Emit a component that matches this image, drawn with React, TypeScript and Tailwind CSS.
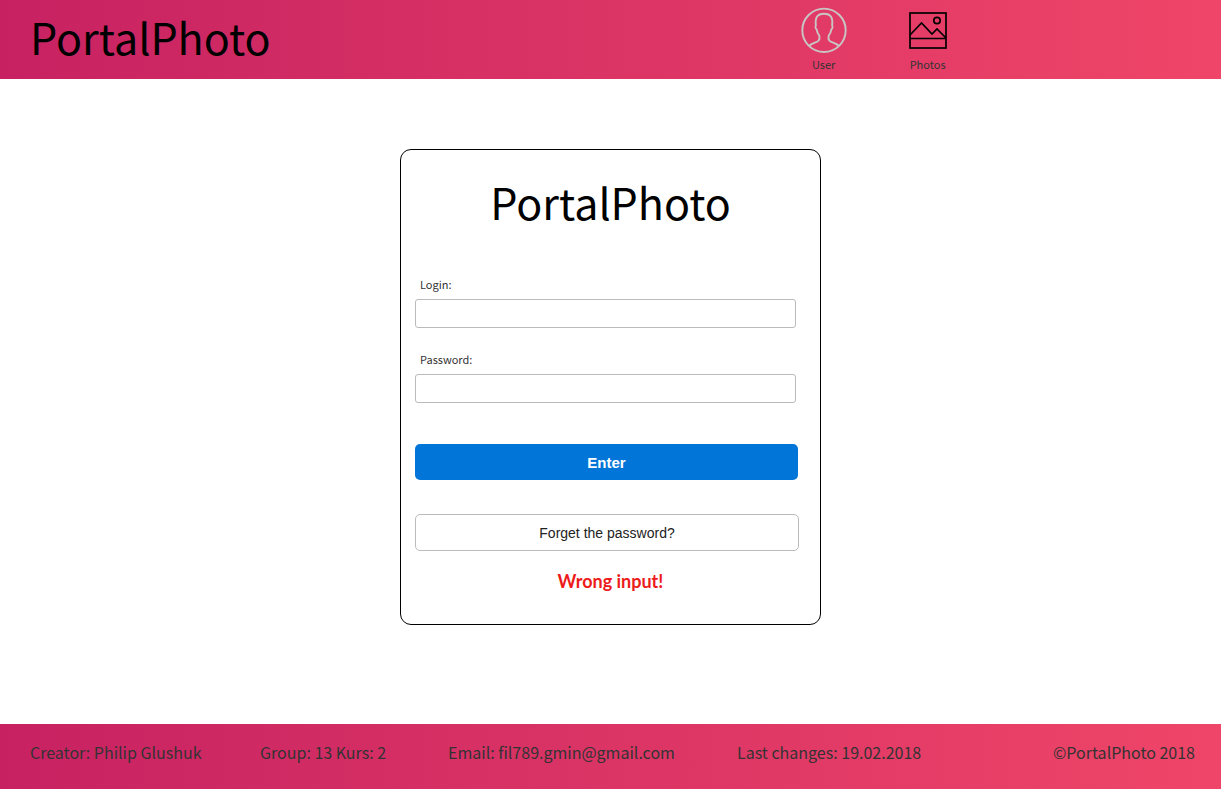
import React from "react";

function UserIcon() {
  return (
    <svg width="46" height="46" viewBox="0 0 46 46" fill="none" stroke="#c9c5c5" strokeWidth="1.9" aria-hidden="true">
      <circle cx="23" cy="23.300" r="21.7" />
      <path d="M8.2 38.8c2.800-2.400 7.200-3.200 9.400-5.200c1.200-1.400 1.100-3.400.7-5c-1.500-1.800-2.300-4-2.600-6c-1.200-.7-1.500-3-.8-4.400c-1-7.400 1.100-11.400 8.100-11.400s9.100 4 8.100 11.400c.7 1.400.4 3.700-.8 4.400c-.3 2-1.100 4.200-2.600 6c-.4 1.600-.5 3.600.7 5c2.200 2 6.600 2.800 9.400 5.200" />
    </svg>
  );
}

function PhotosIcon() {
  return (
    <svg width="38" height="38" viewBox="0 0 38 38" fill="none" stroke="#000" strokeWidth="1.700" aria-hidden="true">
      <rect x="1" y="1" width="36" height="35" />
      <path d="M1 26.500H37M1 23L12.500 11L23 22L28 17L37 26" />
      <circle cx="28" cy="8.500" r="3.200" />
    </svg>
  );
}

const footerItems = [
  { text: "Creator: Philip Glushuk", place: "w-[230px]" },
  { text: "Group: 13 Kurs: 2", place: "w-[188px]" },
  { text: "Email: fil789.gmin@gmail.com", place: "w-[289px]" },
  { text: "Last changes: 19.02.2018", place: "" },
  { text: "©PortalPhoto 2018", place: "ml-auto" },
];

export default function App() {
  return (
    <div className="flex flex-col bg-white font-['Noto_Sans_CJK_SC',sans-serif] text-[#333]">
      <header className="flex h-[79px] items-start bg-linear-to-r from-[#c72162] to-[#ef4568]">
        <a href="#home" className="ml-[30px] w-[60%] pt-[6px] text-[43px] leading-[60px] text-black">
          PortalPhoto
        </a>
        <nav className="ml-[38px] flex gap-[58px] pt-[7px] text-[11px] leading-4">
          <a href="#user" className="flex w-[46px] flex-col items-center gap-[3px]">
            <UserIcon />
            User
          </a>
          <a href="#photos" className="flex w-[46px] flex-col items-center gap-[6px] pt-[5px]">
            <PhotosIcon />
            Photos
          </a>
        </nav>
      </header>

      <main className="flex justify-center pt-[70px] pb-[99px]">
        <form
          className="flex w-[421px] flex-col rounded-[11px] border border-black px-[14px] pb-[31px]"
          onSubmit={(e) => e.preventDefault()}
        >
          <h1 className="pt-[21px] text-center text-[43px] leading-[60px] text-black">PortalPhoto</h1>

          <label htmlFor="login" className="mt-[45px] pl-[5px] text-[11px] leading-4">
            Login:
          </label>
          <input id="login" type="text" className="mt-[7px] mr-[10px] h-[29px] rounded-[3px] border border-[#bbb] px-2 text-sm" />

          <label htmlFor="password" className="mt-[23px] pl-[5px] text-[11px] leading-4">
            Password:
          </label>
          <input id="password" type="password" className="mt-[7px] mr-[10px] h-[29px] rounded-[3px] border border-[#bbb] px-2 text-sm" />

          <button type="submit" className="mt-[41px] mr-2 h-9 rounded-[5px] bg-[#0275d8] pt-0.5 font-['Liberation_Sans',sans-serif] text-[15px] font-bold text-white">
            Enter
          </button>
          <button type="button" className="mt-[34px] mr-[7px] h-[37px] rounded-[5px] border border-[#bbb] bg-white font-['Liberation_Sans',sans-serif] text-sm text-[#222]">
            Forget the password?
          </button>

          <p role="alert" className="mt-[18px] text-center font-[Lato,sans-serif] text-[18px] leading-6 font-bold text-[#ed1c1c]">
            Wrong input!
          </p>
        </form>
      </main>

      <footer className="flex h-[65px] items-start bg-linear-to-r from-[#c72162] to-[#ef4568] pt-4 pr-[26px] pl-[30px] text-[16px] leading-6">
        {footerItems.map((item) => (
          <span key={item.text} className={item.place + " shrink-0 whitespace-nowrap"}>
            {item.text}
          </span>
        ))}
      </footer>
    </div>
  );
}
